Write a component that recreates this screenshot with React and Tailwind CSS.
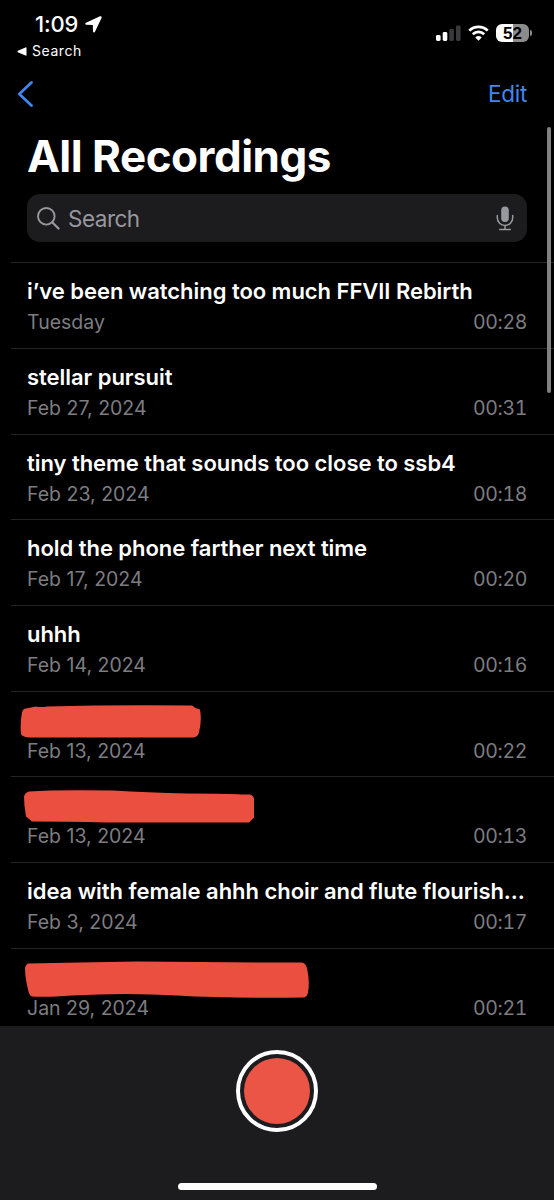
const recordings = [
  { title: "i’ve been watching too much FFVII Rebirth", date: "Tuesday", length: "00:28" },
  { title: "stellar pursuit", date: "Feb 27, 2024", length: "00:31" },
  { title: "tiny theme that sounds too close to ssb4", date: "Feb 23, 2024", length: "00:18" },
  { title: "hold the phone farther next time", date: "Feb 17, 2024", length: "00:20" },
  { title: "uhhh", date: "Feb 14, 2024", length: "00:16" },
  {
    scribble:
      "M-1 2 Q4 1 9 0 Q14 1 20 0 Q90 -2 165 -1 Q168 2 173 3 Q175 14 172 26 Q171 30 167 31 Q80 31 2 31 Q-6 30 -6 27 Q-7 16 -5 6 Q-4 2 -1 2 Z",
    date: "Feb 13, 2024",
    length: "00:22",
  },
  {
    scribble:
      "M2 0 Q30 -2 86 -1 Q120 1 160 2 Q205 2 214 3 L223 3 Q227 4 227 8 L227 26 L222 31 Q140 31 80 31 Q40 30 5 30 L-1 25 Q-3 14 -3 5 Q-2 1 2 0 Z",
    date: "Feb 13, 2024",
    length: "00:13",
  },
  { title: "idea with female ahhh choir and flute flourish...", date: "Feb 3, 2024", length: "00:17" },
  {
    scribble:
      "M1 0 Q50 -1 110 -2 Q200 -1 275 -1 Q279 0 280 5 Q283 18 281 29 Q280 34 276 34 Q200 35 150 32 Q100 29 45 32 Q20 34 5 33 Q2 32 1 26 Q-2 14 -2 4 Q-1 1 1 0 Z",
    date: "Jan 29, 2024",
    length: "00:21",
  },
];

function StatusBar() {
  return (
    <div className="flex h-[68px] shrink-0 justify-between">
      <div className="pt-[10px] pl-4">
        <div className="flex h-7 items-center gap-[7px] pl-[19px]">
          <span className="text-[22px] leading-7 font-medium tracking-[-0.2px]">1:09</span>
          <svg width="17" height="17" viewBox="0 0 17 17" fill="white">
            <path d="M15 .3 1 6.700C-.2 7.300 0 8.700 1.300 8.800L7.800 8.900 8 15.500C8.100 16.800 9.400 17 10 15.800L16.500 2C17 .8 16.200-.2 15 .3Z" />
          </svg>
        </div>
        <div className="flex h-[26px] items-center gap-[5px] pl-[1px]">
          <svg width="10" height="9" viewBox="0 0 10 9" fill="white">
            <path d="M9.500 1V8Q9.500 9 8.500 8.600L.8 5.200Q0 4.500.8 3.800L8.500.4Q9.500 0 9.500 1Z" />
          </svg>
          <span className="text-[14px] leading-6 tracking-[0.55px]">Search</span>
        </div>
      </div>

      <div className="flex h-[66px] items-center gap-[7px] pr-[22px]">
        <svg width="25" height="16" viewBox="0 0 25 16">
          <rect x="0" y="10" width="4.600" height="6" rx="1.400" fill="white" />
          <rect x="6.700" y="7" width="4.600" height="9" rx="1.400" fill="white" />
          <rect x="13.300" y="4" width="4.600" height="12" rx="1.400" fill="#3a3a3c" />
          <rect x="20" y="0.500" width="4.600" height="15.500" rx="1.400" fill="#3a3a3c" />
        </svg>
        <svg width="21" height="16" viewBox="0 0 22 16" fill="none" stroke="white" strokeWidth="2.800">
          <path d="M1.300 5.500C6.800.3 15.200.3 20.700 5.500" />
          <path d="M5 9.300C8.500 6.100 13.500 6.100 17 9.300" />
          <path d="M11 16 7.600 12.700Q11 9.800 14.400 12.700Z" fill="white" stroke="none" />
        </svg>
        <div className="flex items-center gap-[1px]">
          <div className="flex h-[18px] w-[33px] items-center justify-center rounded-[6px] bg-[linear-gradient(to_right,#fff_52%,#8b8b8b_52%)] font-['Liberation_Sans',sans-serif] text-[17px] leading-none font-bold text-black">
            52
          </div>
          <div className="h-[6px] w-[2px] rounded-r-full bg-[#8b8b8b]" />
        </div>
      </div>
    </div>
  );
}

function SearchField() {
  return (
    <div className="mx-[27px] flex h-12 shrink-0 items-center rounded-[13px] bg-[#1c1c1e] pr-[13px] pl-[10px] text-[#98989f]">
      <svg width="23" height="23" viewBox="0 0 23 23" fill="none" stroke="currentColor" strokeWidth="1.900">
        <circle cx="9.300" cy="9.300" r="8.300" />
        <path d="m15.200 15.200 6.300 6.300" strokeWidth="2.300" strokeLinecap="round" />
      </svg>
      <span className="ml-2 flex-1 pt-px text-[22.500px] leading-7 tracking-[-0.5px]">Search</span>
      <svg width="18" height="25" viewBox="0 0 18 25" fill="none" stroke="currentColor" strokeWidth="1.500" strokeLinecap="round">
        <rect x="5.200" y="0.500" width="7.600" height="15.500" rx="3.800" fill="currentColor" stroke="none" />
        <path d="M1.300 9.500v2.300a7.700 7.700 0 0 0 15.400 0V9.500M9 19.500v4M3.700 23.600h10.600" />
      </svg>
    </div>
  );
}

function Recording({ recording }) {
  return (
    <li className="ml-[11px] h-[85.7px] shrink-0 border-t border-[#242426] pt-[13px] pr-[27px] pl-4">
      <div className="h-[31px]">
        {recording.scribble ? (
          <svg width="290" height="31" viewBox="0 -1.500 290 31" className="overflow-visible" fill="#eb4f3f">
            <path d={recording.scribble} className="blur-[0.6px]" />
          </svg>
        ) : (
          <h2 className="text-[22px] leading-[30px] font-semibold tracking-[-0.04px] whitespace-nowrap">
            {recording.title}
          </h2>
        )}
      </div>
      <div className="flex justify-between text-[19.500px] leading-[30px] text-[#7d7d80]">
        <span>{recording.date}</span>
        <span className="tracking-[-0.35px] tabular-nums">{recording.length}</span>
      </div>
    </li>
  );
}

export default function App() {
  return (
    <div className="relative flex h-[1200px] w-[554px] flex-col overflow-hidden bg-black font-['Inter',sans-serif] text-white">
      <StatusBar />

      <nav className="flex h-[52px] shrink-0 items-center justify-between pr-[27px] pl-[17px] text-[#4286f0]">
        <svg width="17" height="26" viewBox="0 0 17 26" fill="none" stroke="currentColor" strokeWidth="2.700" strokeLinecap="round" strokeLinejoin="round">
          <path d="M14.500 1.500 2.300 13l12.200 11.500" />
        </svg>
        <button className="text-[22.500px] leading-7 tracking-[-0.3px]">Edit</button>
      </nav>

      <h1 className="h-[74px] shrink-0 pl-[27px] text-[44px] leading-[72px] font-bold tracking-[-0.5px]">
        All Recordings
      </h1>
      <SearchField />

      <ul className="mt-[20.3px] flex min-h-0 flex-1 flex-col overflow-hidden">
        {recordings.map((recording, i) => (
          <Recording key={i} recording={recording} />
        ))}
      </ul>

      <footer className="flex h-[174px] shrink-0 flex-col items-center justify-between bg-[#1c1c1e] pt-6 pb-[10px]">
        <button className="flex size-[82px] items-center justify-center rounded-full border-4 border-white">
          <span className="size-[66px] rounded-full bg-[#eb5545]" />
        </button>
        <div className="h-[7px] w-[199px] rounded-full bg-white" />
      </footer>

      {/* scroll indicator */}
      <div className="absolute top-[127px] right-[3px] h-[266px] w-1 rounded-full bg-[#818181]" />
    </div>
  );
}
